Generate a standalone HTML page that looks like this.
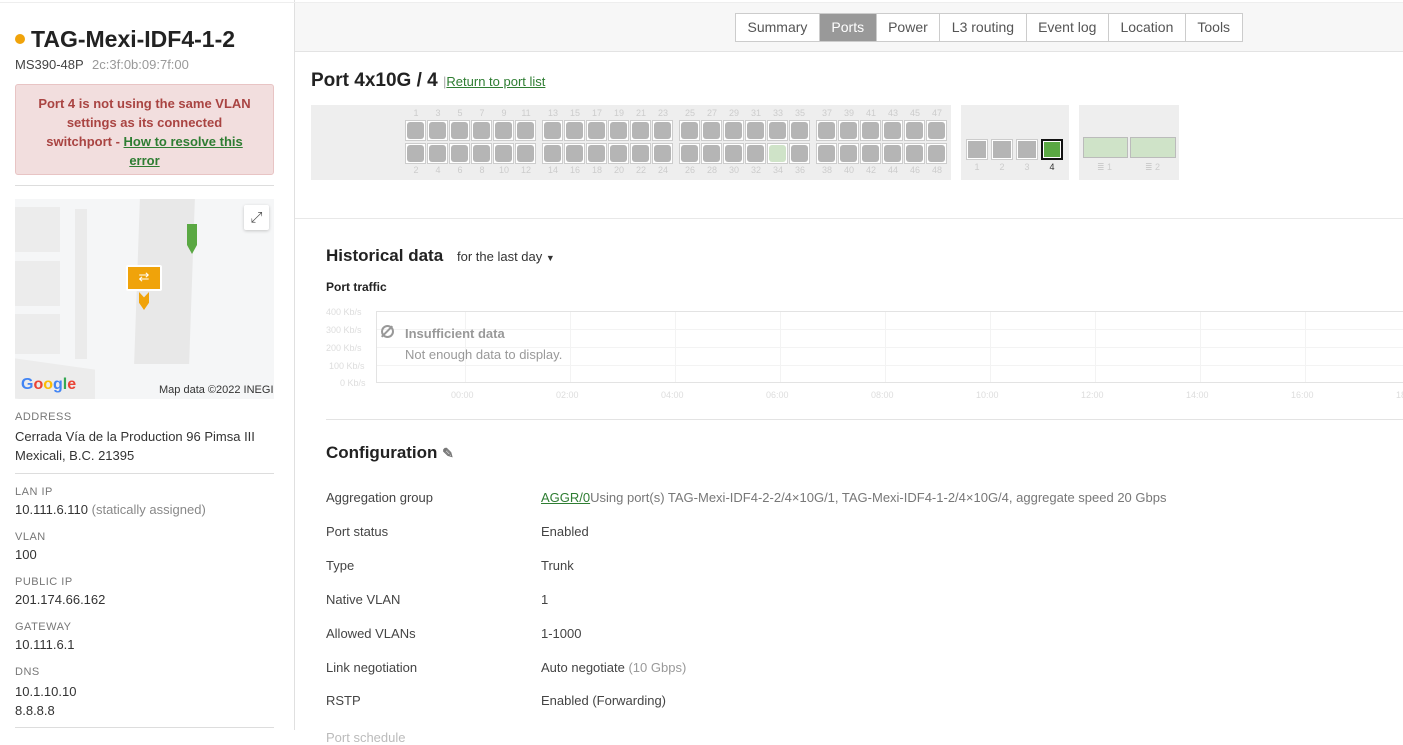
<!DOCTYPE html>
<html><head><meta charset="utf-8"><style>
*{box-sizing:border-box;margin:0;padding:0}
body{width:1403px;height:730px;overflow:hidden;background:#fff;font-family:"Liberation Sans",sans-serif;color:#333;position:relative;font-size:13px}
.abs{position:absolute}
.lbl{position:absolute;left:15px;font-size:11px;color:#777;letter-spacing:.5px}
.val{position:absolute;left:15px;font-size:13px;color:#333}
.hr{position:absolute;left:15px;width:259px;height:1px;background:#ddd}
.tabs{position:absolute;left:735px;top:13px;height:29px;display:flex;border:1px solid #ccc;background:#fff}
.tabs div{padding:0 11.5px;line-height:27px;font-size:14px;color:#555;border-right:1px solid #ccc}
.tabs div:last-child{border-right:none}
.tabs .on{background:#999;color:#fff}
.port{position:absolute;width:21px;height:21px;border:1px solid #ccc;background:#fff;padding:1px}
.port i{display:block;width:100%;height:100%;background:#b5b5b5;border-radius:3px}
.num{position:absolute;font-size:9px;color:#ccc;width:22px;text-align:center}
.row{position:absolute;left:326px;font-size:13px;color:#444}
.rv{position:absolute;left:541px;font-size:13px;color:#444}
.ax{position:absolute;font-size:9px;color:#ddd}
</style></head><body>
<div class="abs" style="left:294px;top:0;width:1px;height:730px;background:#e0e0e0"></div>
<div class="abs" style="left:0;top:2px;width:1403px;height:1px;background:#eee"></div>
<div class="abs" style="left:15px;top:34px;width:10px;height:10px;border-radius:50%;background:#f0a30a"></div>
<div class="abs" style="left:31px;top:26px;font-size:23px;font-weight:bold;color:#222">TAG-Mexi-IDF4-1-2</div>
<div class="abs" style="left:15px;top:57px;font-size:13px;color:#444">MS390-48P <span style="color:#999;margin-left:5px">2c:3f:0b:09:7f:00</span></div>
<div class="abs" style="left:15px;top:84px;width:259px;height:91px;background:#f2dede;border:1px solid #e8c4c4;border-radius:3px;color:#a94442;font-weight:bold;font-size:13px;text-align:center;line-height:19px;padding:9px 18px 0">Port 4 is not using the same VLAN settings as its connected switchport - <span style="color:#2e7d32;text-decoration:underline">How to resolve this error</span></div>
<div class="hr" style="top:185px"></div>
<div class="abs" style="left:15px;top:199px;width:259px;height:200px;background:#f5f6f7;overflow:hidden">
 <div class="abs" style="left:122px;top:0;width:55px;height:165px;background:#e8e8e8;transform:skewX(-2deg)"></div>
 <div class="abs" style="left:0;top:8px;width:45px;height:45px;background:#ececec"></div>
 <div class="abs" style="left:0;top:62px;width:45px;height:45px;background:#ececec"></div>
 <div class="abs" style="left:0;top:115px;width:45px;height:40px;background:#ececec"></div>
 <div class="abs" style="left:60px;top:10px;width:12px;height:150px;background:#ebebeb"></div>
 <div class="abs" style="left:0;top:165px;width:80px;height:40px;background:#ececec;transform:skewY(8deg)"></div>
 <div class="abs" style="left:229px;top:6px;width:25px;height:25px;background:#fff;border-radius:2px;box-shadow:0 1px 3px rgba(0,0,0,.2);color:#555;font-size:15px;text-align:center;line-height:25px">⤢</div>
 <div class="abs" style="left:172px;top:25px;width:10px;height:30px;background:#5aa843;clip-path:polygon(0 0,100% 0,100% 70%,50% 100%,0 70%)"></div>
 <div class="abs" style="left:111px;top:66px;width:36px;height:26px;background:#f0a30a;border:2px solid #fff;border-radius:2px;color:#fff;text-align:center;line-height:20px;font-size:13px">⇄</div>
 <div class="abs" style="left:124px;top:93px;width:10px;height:18px;background:#f0a30a;clip-path:polygon(0 0,50% 30%,100% 0,100% 60%,50% 100%,0 60%)"></div>
 <div class="abs" style="left:6px;top:177px;font-size:16px;font-weight:bold;color:#4285f4">G<span style="color:#ea4335">o</span><span style="color:#fbbc05">o</span>g<span style="color:#34a853">l</span><span style="color:#ea4335">e</span></div>
 <div class="abs" style="left:144px;top:185px;font-size:11px;color:#333">Map data ©2022 INEGI</div>
</div>
<div class="lbl" style="top:411px">ADDRESS</div>
<div class="val" style="top:427px;line-height:19px">Cerrada Vía de la Production 96 Pimsa III<br>Mexicali, B.C. 21395</div>
<div class="hr" style="top:473px"></div>
<div class="lbl" style="top:486px">LAN IP</div>
<div class="val" style="top:502px">10.111.6.110 <span style="color:#888">(statically assigned)</span></div>
<div class="lbl" style="top:531px">VLAN</div>
<div class="val" style="top:547px">100</div>
<div class="lbl" style="top:576px">PUBLIC IP</div>
<div class="val" style="top:592px">201.174.66.162</div>
<div class="lbl" style="top:621px">GATEWAY</div>
<div class="val" style="top:637px">10.111.6.1</div>
<div class="lbl" style="top:666px">DNS</div>
<div class="val" style="top:682px;line-height:19px">10.1.10.10<br>8.8.8.8</div>
<div class="hr" style="top:727px"></div>
<div class="abs" style="left:295px;top:3px;width:1108px;height:49px;background:#f7f7f7;border-bottom:1px solid #e3e3e3"></div>
<div class="tabs"><div>Summary</div><div class="on">Ports</div><div>Power</div><div>L3 routing</div><div>Event log</div><div>Location</div><div>Tools</div></div>
<div class="abs" style="left:311px;top:70px;font-size:19px;font-weight:bold;color:#222">Port 4x10G / 4 <span style="font-size:13px;font-weight:normal;color:#aaa">|</span><span style="font-size:13px;font-weight:normal;color:#2e7d32;text-decoration:underline">Return to port list</span></div>
<div class="abs" style="left:311px;top:105px;width:640px;height:75px;background:#eee"></div>
<div class="abs" style="left:961px;top:105px;width:108px;height:75px;background:#eee"></div>
<div class="abs" style="left:1079px;top:105px;width:100px;height:75px;background:#eee"></div>
<div id="ports"></div>
<div class="abs" style="left:1083px;top:137px;width:45px;height:21px;background:#cfe3c8;border:1px solid #bbb"></div>
<div class="abs" style="left:1130px;top:137px;width:46px;height:21px;background:#cfe3c8;border:1px solid #bbb"></div>
<div class="abs" style="left:1097px;top:162px;font-size:9px;color:#ccc">≣ 1</div>
<div class="abs" style="left:1145px;top:162px;font-size:9px;color:#ccc">≣ 2</div>
<div class="abs" style="left:295px;top:218px;width:1108px;height:1px;background:#e8e8e8"></div>
<div class="abs" style="left:326px;top:246px;font-size:17px;font-weight:bold;color:#222">Historical data</div>
<div class="abs" style="left:457px;top:249px;font-size:13px;color:#333">for the last day <span style="font-size:9px">▼</span></div>
<div class="abs" style="left:326px;top:280px;font-size:12px;font-weight:bold;color:#222">Port traffic</div>
<div class="abs" style="left:376px;top:311px;width:1030px;height:72px;border:1px solid #e3e3e3"></div>
<div class="ax" style="left:326px;top:307px">400 Kb/s</div>
<div class="ax" style="left:326px;top:325px">300 Kb/s</div>
<div class="ax" style="left:326px;top:343px">200 Kb/s</div>
<div class="ax" style="left:329px;top:361px">100 Kb/s</div>
<div class="ax" style="left:340px;top:378px">0 Kb/s</div>
<div id="grid"></div>
<div class="abs" style="left:381px;top:325px;width:13px;height:13px;border:2px solid #999;border-radius:50%"></div>
<div class="abs" style="left:386px;top:324px;width:2px;height:15px;background:#999;transform:rotate(45deg)"></div>
<div class="abs" style="left:405px;top:326px;font-size:13px;font-weight:bold;color:#999">Insufficient data</div>
<div class="abs" style="left:405px;top:347px;font-size:13px;color:#999">Not enough data to display.</div>
<div class="abs" style="left:326px;top:419px;width:1077px;height:1px;background:#e3e3e3"></div>
<div class="abs" style="left:326px;top:443px;font-size:17px;font-weight:bold;color:#222">Configuration <span style="font-size:14px;color:#777">✎</span></div>
<div class="row" style="top:490px">Aggregation group</div><div class="rv" style="top:490px"><span style="color:#2e7d32;text-decoration:underline">AGGR/0</span><span style="color:#777">Using port(s) TAG-Mexi-IDF4-2-2/4×10G/1, TAG-Mexi-IDF4-1-2/4×10G/4, aggregate speed 20 Gbps</span></div>
<div class="row" style="top:524px">Port status</div><div class="rv" style="top:524px">Enabled</div>
<div class="row" style="top:558px">Type</div><div class="rv" style="top:558px">Trunk</div>
<div class="row" style="top:592px">Native VLAN</div><div class="rv" style="top:592px">1</div>
<div class="row" style="top:626px">Allowed VLANs</div><div class="rv" style="top:626px">1-1000</div>
<div class="row" style="top:660px">Link negotiation</div><div class="rv" style="top:660px">Auto negotiate <span style="color:#999">(10 Gbps)</span></div>
<div class="row" style="top:693px">RSTP</div><div class="rv" style="top:693px">Enabled (Forwarding)</div>
<div class="row" style="top:730px;color:#bbb">Port schedule</div>
<script>
var h='';
for(var c=0;c<24;c++){var g=Math.floor(c/6);var x=405+g*137+(c%6)*22;
 var t=2*c+1,b=2*c+2;
 h+='<div class="num" style="left:'+x+'px;top:108px">'+t+'</div>';
 h+='<div class="port" style="left:'+x+'px;top:120px"><i></i></div>';
 h+='<div class="port" style="left:'+x+'px;top:143px"><i'+(b==34?' style="background:#cfe3c8"':'')+'></i></div>';
 h+='<div class="num" style="left:'+x+'px;top:165px">'+b+'</div>';}
for(var i=0;i<4;i++){var x=966+i*25;
 h+='<div class="port" style="left:'+x+'px;top:139px;width:22px;'+(i==3?'border:2px solid #111;':'')+'"><i style="border-radius:0;'+(i==3?'background:#5aa843':'')+'"></i></div>';
 h+='<div class="num" style="left:'+x+'px;top:162px;'+(i==3?'color:#333':'')+'">'+(i+1)+'</div>';}
document.getElementById('ports').innerHTML=h;
var g='';var L=['00:00','02:00','04:00','06:00','08:00','10:00','12:00','14:00','16:00','18:00'];
for(var i=0;i<10;i++){var x=465+i*105;g+='<div class="abs" style="left:'+x+'px;top:312px;width:1px;height:70px;background:#f3f3f3"></div><div class="ax" style="left:'+(x-14)+'px;top:390px">'+L[i]+'</div>';}
for(var j=1;j<4;j++)g+='<div class="abs" style="left:377px;top:'+(311+j*18)+'px;width:1030px;height:1px;background:#f3f3f3"></div>';
document.getElementById('grid').innerHTML=g;
</script>
</body></html>
